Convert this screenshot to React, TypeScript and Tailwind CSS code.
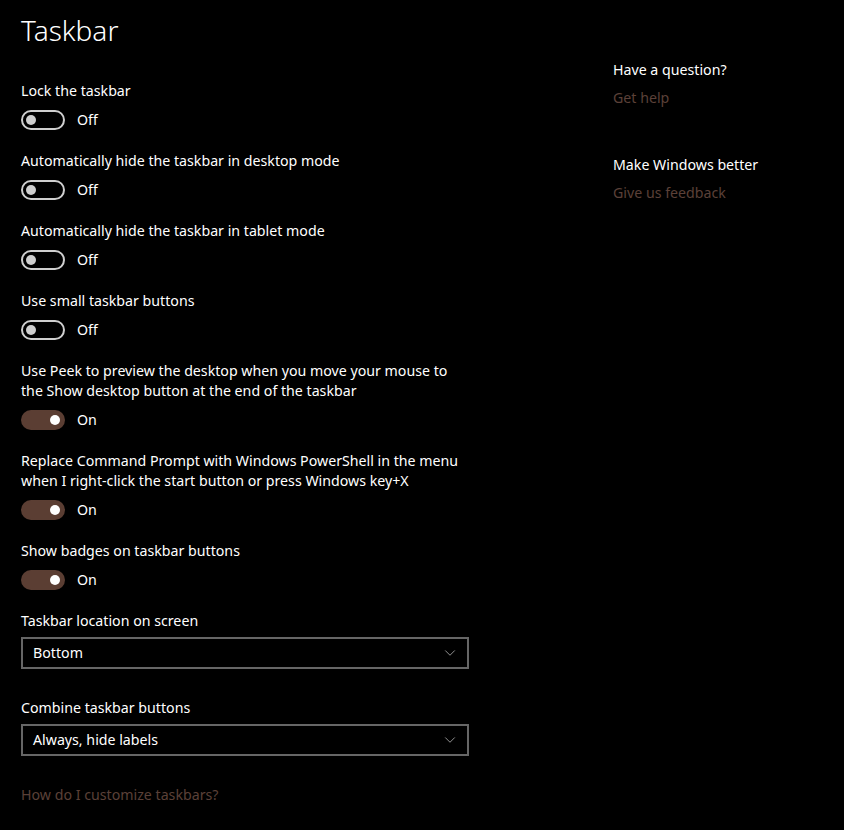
import { ChevronDown } from "lucide-react";

type ToggleSetting = { label: string[]; on: boolean };

const toggles: ToggleSetting[] = [
  { label: ["Lock the taskbar"], on: false },
  { label: ["Automatically hide the taskbar in desktop mode"], on: false },
  { label: ["Automatically hide the taskbar in tablet mode"], on: false },
  { label: ["Use small taskbar buttons"], on: false },
  {
    label: [
      "Use Peek to preview the desktop when you move your mouse to",
      "the Show desktop button at the end of the taskbar",
    ],
    on: true,
  },
  {
    label: [
      "Replace Command Prompt with Windows PowerShell in the menu",
      "when I right-click the start button or press Windows key+X",
    ],
    on: true,
  },
  { label: ["Show badges on taskbar buttons"], on: true },
];

function Toggle({ on }: { on: boolean }) {
  return (
    <div className="flex items-center h-[20px] mt-[9px]">
      {on ? (
        <div className="w-[44px] h-[20px] rounded-full bg-[#5b3e33] flex items-center justify-end pr-[5px]">
          <div className="w-[10px] h-[10px] rounded-full bg-white" />
        </div>
      ) : (
        <div className="w-[44px] h-[20px] rounded-full border-2 border-[#cfcfcf] flex items-center pl-[3px]">
          <div className="w-[10px] h-[10px] rounded-full bg-[#cfcfcf]" />
        </div>
      )}
      <span className="ml-[12px] text-white">{on ? "On" : "Off"}</span>
    </div>
  );
}

function Dropdown({ label, value }: { label: string; value: string }) {
  return (
    <div className="mb-[29px]">
      <div className="h-[20px] leading-[20px] text-white">{label}</div>
      <div className="mt-[6px] w-[448px] h-[32px] border-2 border-[#666666] flex items-center justify-between pl-[10px] pr-[8px]">
        <span className="text-white">{value}</span>
        <ChevronDown className="w-[18px] h-[18px] text-[#9a9a9a]" strokeWidth={1.25} />
      </div>
    </div>
  );
}

export default function App() {
  return (
    <div
      className="w-[844px] h-[830px] bg-black text-[14.2px] text-white flex"
      style={{ fontFamily: '"Segoe UI", "Noto Sans", "Open Sans", sans-serif' }}
    >
      <div className="w-[613px] pl-[21px] pt-[10px]">
        <h1 className="text-[28px] font-light leading-[40px] text-white">Taskbar</h1>
        <div className="mt-[31px]">
          {toggles.map((t, i) => (
            <div key={i} className="mb-[21px]">
              {t.label.map((line, j) => (
                <div key={j} className="h-[20px] leading-[20px]">
                  {line}
                </div>
              ))}
              <Toggle on={t.on} />
            </div>
          ))}
        </div>
        <Dropdown label="Taskbar location on screen" value="Bottom" />
        <Dropdown label="Combine taskbar buttons" value="Always, hide labels" />
        <div className="h-[20px] leading-[20px] text-[#5b4038]">How do I customize taskbars?</div>
      </div>
      <div className="pt-[60px]">
        <div className="h-[20px] leading-[20px]">Have a question?</div>
        <div className="mt-[8px] h-[20px] leading-[20px] text-[#5b4038]">Get help</div>
        <div className="mt-[47px] h-[20px] leading-[20px]">Make Windows better</div>
        <div className="mt-[8px] h-[20px] leading-[20px] text-[#5b4038]">Give us feedback</div>
      </div>
    </div>
  );
}
